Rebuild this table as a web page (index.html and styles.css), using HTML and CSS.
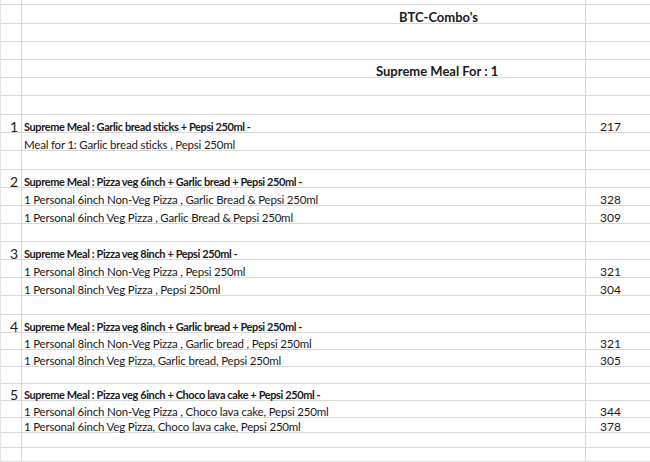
FILE: index.html
```html
<!DOCTYPE html>
<html>
<head>
<meta charset="utf-8">
<link rel="stylesheet" href="styles.css">
</head>
<body>
<div class="sheet">
  <div class="c n"></div><div class="c"></div><div class="c p"></div>
  <div class="c n"></div><div class="c title"><span class="h">BTC-Combo's</span></div><div class="c p"></div>
  <div class="c n"></div><div class="c"></div><div class="c p"></div>
  <div class="c n"></div><div class="c"></div><div class="c p"></div>
  <div class="c n"></div><div class="c sub"><span class="h">Supreme Meal For : 1</span></div><div class="c p"></div>
  <div class="c n"></div><div class="c"></div><div class="c p"></div>
  <div class="c n"></div><div class="c"></div><div class="c p"></div>

  <div class="c n"><span>1</span></div><div class="c"><span class="b">Supreme Meal : Garlic bread sticks + Pepsi 250ml -</span></div><div class="c p"><span>217</span></div>
  <div class="c n"></div><div class="c"><span>Meal for 1: Garlic bread sticks , Pepsi 250ml</span></div><div class="c p"></div>
  <div class="c n"></div><div class="c"></div><div class="c p"></div>

  <div class="c n"><span>2</span></div><div class="c"><span class="b">Supreme Meal : Pizza veg 6inch + Garlic bread + Pepsi 250ml -</span></div><div class="c p"></div>
  <div class="c n"></div><div class="c"><span>1 Personal 6inch Non-Veg Pizza , Garlic Bread &amp; Pepsi 250ml</span></div><div class="c p"><span>328</span></div>
  <div class="c n"></div><div class="c"><span>1 Personal 6inch Veg Pizza , Garlic Bread &amp; Pepsi 250ml</span></div><div class="c p"><span>309</span></div>
  <div class="c n"></div><div class="c"></div><div class="c p"></div>

  <div class="c n"><span>3</span></div><div class="c"><span class="b">Supreme Meal : Pizza veg 8inch + Pepsi 250ml -</span></div><div class="c p"></div>
  <div class="c n"></div><div class="c"><span>1 Personal 8inch Non-Veg Pizza , Pepsi 250ml</span></div><div class="c p"><span>321</span></div>
  <div class="c n"></div><div class="c"><span>1 Personal 8inch Veg Pizza , Pepsi 250ml</span></div><div class="c p"><span>304</span></div>
  <div class="c n"></div><div class="c"></div><div class="c p"></div>

  <div class="c n"><span>4</span></div><div class="c"><span class="b">Supreme Meal : Pizza veg 8inch + Garlic bread + Pepsi 250ml -</span></div><div class="c p"></div>
  <div class="c n"></div><div class="c"><span>1 Personal 8inch Non-Veg Pizza , Garlic bread , Pepsi 250ml</span></div><div class="c p"><span>321</span></div>
  <div class="c n"></div><div class="c"><span>1 Personal 8inch Veg Pizza, Garlic bread, Pepsi 250ml</span></div><div class="c p"><span>305</span></div>
  <div class="c n"></div><div class="c"></div><div class="c p"></div>

  <div class="c n"><span>5</span></div><div class="c"><span class="b">Supreme Meal : Pizza veg 6inch + Choco lava cake + Pepsi 250ml -</span></div><div class="c p"></div>
  <div class="c n"></div><div class="c"><span>1 Personal 6inch Non-Veg Pizza , Choco lava cake, Pepsi 250ml</span></div><div class="c p"><span>344</span></div>
  <div class="c n"></div><div class="c"><span>1 Personal 6inch Veg Pizza, Choco lava cake, Pepsi 250ml</span></div><div class="c p"><span>378</span></div>
  <div class="c n"></div><div class="c"></div><div class="c p"></div>
  <div class="c n"></div><div class="c"></div><div class="c p"></div>
</div>
</body>
</html>
```

FILE: styles.css
```css
html, body {
  margin: 0;
  padding: 0;
  background: #ffffff;
}
.sheet {
  display: grid;
  grid-template-columns: 21px 564px 64px;
  grid-template-rows: 5px 19px 18px 18px 18px 18px 19px 18px 18px 19px 18px 18px 18px 18px 18px 18px 18px 19px 18px 17px 17px 17px 17px 17px 15px 15px 14px;
  font-family: "Lato", "Open Sans", sans-serif;
  font-size: 11.5px;
  letter-spacing: -0.2px;
  color: #1a1a1a;
  border-left: 1px solid #e4e4e4;
  width: 650px;
  box-sizing: border-box;
}
.c {
  border-bottom: 1px solid #d8d8d8;
  border-right: 1px solid #d8d8d8;
  display: flex;
  align-items: flex-end;
  padding: 0 0 0 2px;
  line-height: 15px;
  white-space: nowrap;
  box-sizing: border-box;
}
.c > span {
  margin-bottom: -2px;
}
.n {
  justify-content: flex-end;
  padding: 0 3px 0 0;
  font-size: 14px;
  letter-spacing: 0;
}
.p {
  border-right: none;
  padding-left: 14px;
  font-size: 12px;
  letter-spacing: 0;
}
.b {
  font-weight: bold;
  font-size: 11px;
  letter-spacing: -0.4px;
}
.h {
  font-weight: bold;
  font-size: 13px;
  letter-spacing: 0;
}
.title {
  padding-left: 377px;
}
.sub {
  padding-left: 354px;
}
```
